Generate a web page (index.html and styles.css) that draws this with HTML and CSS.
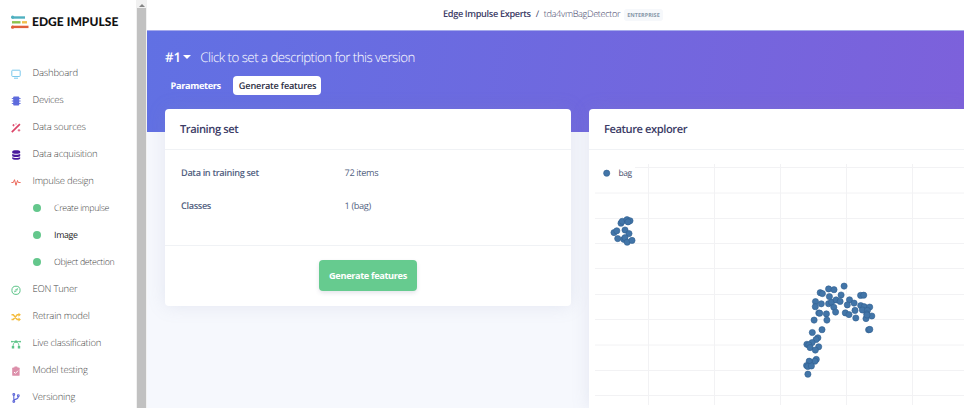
FILE: index.html
```
<!DOCTYPE html>
<html lang="en">
<head>
<meta charset="utf-8">
<title>Edge Impulse - Generate features</title>
<link rel="stylesheet" href="styles.css">
</head>
<body>
<div class="app">
  <aside class="sidebar">
    <div class="logo">
      <svg width="18" height="14" viewBox="0 0 18 14" fill="none" stroke-width="2.400">
        <path d="M1 2.500h13" stroke="#4fb0c0"/><path d="M1 7.300h8.500" stroke="#8cc34b"/><path d="M11 7.300h5" stroke="#f0c04c"/><path d="M1 11.900h16.500" stroke="#e0603a"/>
        <circle cx="1.600" cy="2.200" r="1.600" fill="#4fb0c0" stroke="none"/><circle cx="1.600" cy="12.200" r="1.600" fill="#e0603a" stroke="none"/>
      </svg>
      <span>EDGE IMPULSE</span>
    </div>
    <nav class="nav">
      <a class="item"><svg class="icon" viewBox="0 0 10 10" fill="none" stroke="#7cc8ec"><rect x=".8" y="1.200" width="8.400" height="6.300" rx=".8"/><path d="M3 9.200h4"/></svg><span>Dashboard</span></a>
      <a class="item"><svg class="icon" viewBox="0 0 10 10"><rect x="2.200" y=".5" width="6" height="9" rx=".8" fill="#5e6bdc"/><path d="M.8 2.500h8.800M.8 5h8.800M.8 7.500h8.800" stroke="#5e6bdc" stroke-width=".9"/></svg><span>Devices</span></a>
      <a class="item"><svg class="icon" viewBox="0 0 10 10" stroke="#dc4468"><path d="M.8 9.200 8.900 1.100" stroke-width="1.700"/><path d="M2.500 1v2.400M1.300 2.200h2.400M8 6v2.600M6.700 7.300h2.600M5 .4v1.200" stroke-width=".8"/></svg><span>Data sources</span></a>
      <a class="item"><svg class="icon" viewBox="0 0 10 10" fill="#49199c"><path d="M1.200 1.700C1.200-.1 9.200-.1 9.200 1.700v1c0 1.400-8 1.400-8 0zM1.200 4.100c2 1 6 1 8 0v1.800c0 1.400-8 1.400-8 0zM1.200 7.200c2 1 6 1 8 0v1.300c0 1.700-8 1.700-8 0z"/></svg><span>Data acquisition</span></a>
      <a class="item"><svg class="icon" viewBox="0 0 10 10" fill="none" stroke="#ec6a5c" stroke-width="1"><path d="M.4 5.500h1.900L3.500 2.700 5 8.300 6.500 3.500l.8 2h2.300"/></svg><span>Impulse design</span></a>
      <a class="item sub"><i class="dot"></i><span>Create impulse</span></a>
      <a class="item sub active"><i class="dot"></i><span>Image</span></a>
      <a class="item sub"><i class="dot"></i><span>Object detection</span></a>
      <a class="item"><svg class="icon" viewBox="0 0 10 10" fill="none" stroke="#5cc488"><circle cx="5" cy="5.300" r="4.100"/><path d="M7.200 3.100 6 6.100 2.900 7.500 4.200 4.500z" fill="#5cc488" stroke="none"/><circle cx="5" cy="5.300" r=".7" fill="#fff" stroke="none"/></svg><span>EON Tuner</span></a>
      <a class="item"><svg class="icon" viewBox="0 0 10 10" fill="none" stroke="#f4bd3f" stroke-width="1.400"><path d="M.5 2.800h1.800L6.200 7.500H8M.5 7.500h1.800L6.200 2.800H8"/><path d="M7.500 .8 9.900 2.800 7.500 4.800zM7.500 5.500l2.400 2-2.400 2z" fill="#f4bd3f" stroke="none"/></svg><span>Retrain model</span></a>
      <a class="item"><svg class="icon" viewBox="0 0 10 10" fill="none" stroke="#5cc488" stroke-width=".9"><path d="M.5 2.600h9M2 8C2 5 3 3 5 2.600 7 3 8 5 8 8"/><path d="M3.800 1.400h2.400v2.400H3.800zM.8 7.100h2.400v2.400H.8zM6.800 7.100h2.400v2.400H6.800z" fill="#5cc488" stroke="none"/><circle cx=".9" cy="2.600" r=".9" fill="#5cc488" stroke="none"/><circle cx="9.100" cy="2.600" r=".9" fill="#5cc488" stroke="none"/></svg><span>Live classification</span></a>
      <a class="item"><svg class="icon" viewBox="0 0 10 10"><rect x="1.200" y="1.400" width="7.400" height="8.400" rx=".9" fill="#dc8faa"/><rect x="3.300" y=".4" width="3.200" height="2.200" rx=".6" fill="#dc8faa"/><path d="M3 6l1.400 1.400L7 4.700" fill="none" stroke="#fff"/></svg><span>Model testing</span></a>
      <a class="item"><svg class="icon" viewBox="0 0 10 10" fill="none" stroke="#5f68d8" stroke-width="1.100"><path d="M2.800 2v6M2.800 6.800C5 6 7.300 6.400 7.300 3.500"/><circle cx="2.800" cy="1.500" r=".9"/><circle cx="2.800" cy="8.500" r=".9"/><circle cx="7.300" cy="2.700" r=".9"/></svg><span>Versioning</span></a>
    </nav>
  </aside>
  <div class="scrollbar"><div class="up"><svg width="6" height="4" viewBox="0 0 6 4"><path d="M0 4 3 1l3 3z" fill="#858585"/></svg></div><div class="thumb"></div></div>
  <main class="main">
    <header class="crumbs"><b>Edge Impulse Experts</b><span class="slash">/</span><span class="project">tda4vmBagDetector</span><span class="badge">ENTERPRISE</span></header>
    <section class="hero">
      <div class="version"><strong>#1</strong><i class="caret"></i><span>Click to set a description for this version</span></div>
      <div class="tabs"><a class="tab">Parameters</a><a class="tab selected">Generate features</a></div>
    </section>
    <div class="cards">
      <section class="card training">
        <h2>Training set</h2>
        <dl>
          <dt>Data in training set</dt><dd>72 items</dd>
          <dt>Classes</dt><dd>1 (bag)</dd>
        </dl>
        <footer><button>Generate features</button></footer>
      </section>
      <section class="card explorer">
        <h2>Feature explorer</h2>
        <svg class="plot" id="plot" width="375" height="258" viewBox="589 150 375 258"></svg>
      </section>
    </div>
  </main>
</div>
<script src="plot.js"></script>
</body>
</html>
```

FILE: styles.css
```
* { box-sizing: border-box; }
body { margin: 0; background: #fff; font-family: "Open Sans", sans-serif; color: #3c3c66; text-rendering: geometricPrecision; }
.app { display: flex; width: 964px; height: 408px; overflow: hidden; }
.sidebar { width: 136px; flex: none; background: #fff; }
.logo { display: flex; align-items: center; height: 28px; margin-top: 8px; padding-left: 11px; gap: 3px; font: 900 12px/28px Lato, sans-serif; color: #111; white-space: nowrap; letter-spacing: .05px; }
.nav { margin-top: 23px; }
.item { display: flex; align-items: center; height: 27px; padding-left: 10.500px; font-size: 9.500px; letter-spacing: -.22px; font-weight: 300; color: #444; white-space: nowrap; }
.icon { width: 10px; height: 10px; margin-right: 12px; flex: none; overflow: visible; position: relative; top: 1px; }
.sub { padding-left: 33px; font-size: 8.800px; letter-spacing: -.32px; }
.sub span { position: relative; top: .5px; }
.active { color: #222; font-weight: 400; }
.dot { width: 8px; height: 8px; margin-right: 13px; border-radius: 50%; background: #64c78c; }
.scrollbar { width: 11px; flex: none; padding: 2px 1px 0; background: #f1f1f1; }
.up { display: flex; align-items: center; justify-content: center; height: 6px; }
.thumb { height: 400px; background: #c1c1c1; }
.main { flex: 1; min-width: 0; background: #f6f8fd; }
.crumbs { display: flex; align-items: center; height: 30px; padding: 0 0 3px 296px; background: #fff; font-size: 9.200px; letter-spacing: -.35px; white-space: nowrap; }
.crumbs b { font-weight: 600; }
.slash { margin: 0 5px 0 5px; }
.project { font-weight: 300; }
.badge { margin: 2px 0 0 4px; padding: 2px 3px; border-radius: 3px; background: #f6f8fb; color: #8898aa; font-size: 5.500px; letter-spacing: 0; line-height: 8px; font-weight: 700; }
.hero { height: 102px; padding: 16px 0 0 18px; border-top: 1px solid #a5aaeb; background: linear-gradient(100deg, #5e72e4 -10%, #805fda 112%); color: #fff; white-space: nowrap; }
.version { display: flex; align-items: center; height: 20px; font-size: 13.300px; letter-spacing: -.53px; font-weight: 300; }
.version strong { font-weight: 600; letter-spacing: -.2px; }
.caret { margin: 0 9.500px 0 2px; border: 4px solid transparent; border-top-color: #fff; border-bottom: 0; }
.tabs { display: flex; margin-top: 9px; gap: 7.500px; }
.tab { padding: 0 5px 0 5.500px; height: 19px; border-radius: 4px; font-size: 9.200px; letter-spacing: -.33px; line-height: 19px; font-weight: 700; }
.selected { background: #fff; color: #2b2e42; font-weight: 600; letter-spacing: -.2px; }
.cards { display: flex; align-items: flex-start; gap: 18px; margin: -23px 0 0 18px; }
.card { flex: none; background: #fff; border-radius: 4px; box-shadow: 0 0 18px rgba(136,142,180,.17); }
h2 { margin: 0; padding-left: 15px; height: 41px; border-bottom: 1px solid #f0f2f5; font-size: 11.200px; letter-spacing: -.45px; line-height: 41px; font-weight: 600; }
.training { width: 406px; height: 197px; }
dl { display: grid; grid-template-columns: 163.500px 1fr; grid-auto-rows: 33px; align-items: center; margin: 0; padding: 6px 0 0 16px; height: 95px; font-size: 9.200px; letter-spacing: -.35px; color: #525f7f; }
dt { font-weight: 600; }
dd { margin: 0; }
footer { display: flex; justify-content: center; padding-top: 14px; height: 61px; border-top: 1px solid #f0f2f5; }
button { width: 98px; height: 31px; padding: 0; border: 0; border-radius: 4px; background: #66cb8f; box-shadow: 0 2px 4px rgba(50,50,93,.13); color: #fff; font: 700 9.200px "Open Sans", sans-serif; letter-spacing: -.35px; white-space: nowrap; }
.explorer { width: 375px; border-radius: 4px 0 0 0; }
.explorer h2 { letter-spacing: -.45px; }
.plot { display: block; }
.grid { stroke: #f2f2f4; stroke-width: 1; }
.point { fill: #4275a8; stroke: #305f91; stroke-width: .6; }
.legend { font-size: 8.500px; letter-spacing: -.4px; fill: #4c5070; }
```

FILE: plot.js
```
const plot = document.getElementById('plot');
function add(name, attrs) {
  const el = document.createElementNS('http://www.w3.org/2000/svg', name);
  for (const key in attrs) el.setAttribute(key, attrs[key]);
  plot.appendChild(el);
  return el;
}
[648.5, 714.5, 780.5, 846.5, 912.5].forEach(x => add('line', {x1: x, x2: x, y1: 164, y2: 405, class: 'grid'}));
[167.5, 193, 218.5, 243.5, 268.5, 294.5, 319.5, 345, 370.5, 395.5].forEach((y, i) =>
  add('line', {x1: i ? 595 : 635, x2: 964, y1: y, y2: y, class: 'grid'}));
// Feature positions in tenths of a pixel.
const points = [
  [6210,2232],[6223,2213],[6270,2197],[6300,2208],[6280,2219],[6140,2326],[6168,2308],[6250,2300],[6290,2336],[6177,2386],[6237,2393],[6250,2377],[6272,2422],[6320,2404],
  [8441,2861],[8286,2889],[8340,2897],[8202,2927],[8224,2936],[8294,2966],[8411,2950],[8606,2954],[8637,2952],
  [8155,3016],[8153,3067],[8213,3038],[8286,3037],[8316,3022],[8361,2999],[8401,3014],[8338,3073],[8356,3121],[8495,2998],[8541,3031],[8473,3049],
  [8188,3130],[8197,3132],[8264,3139],[8141,3201],[8269,3201],[8453,3129],[8490,3146],[8550,3104],[8558,3180],[8607,3056],[8641,3067],[8697,3071],[8624,3100],[8674,3104],[8668,3139],[8718,3160],[8660,3186],[8670,3150],[8686,3298],[8698,3294],
  [8220,3297],[8123,3325],[8179,3378],[8161,3395],[8121,3426],[8069,3443],[8088,3449],[8101,3476],[8187,3468],[8153,3501],[8163,3594],[8149,3612],[8092,3612],[8066,3655],[8078,3665],[8114,3660],[8079,3742]
];
points.forEach(([x, y]) => add('circle', {cx: x / 10, cy: y / 10, r: 3.1, class: 'point'}));
add('circle', {cx: 606.7, cy: 173.2, r: 3.1, class: 'point'});
add('text', {x: 618.5, y: 176.3, class: 'legend'}).textContent = 'bag';
```
